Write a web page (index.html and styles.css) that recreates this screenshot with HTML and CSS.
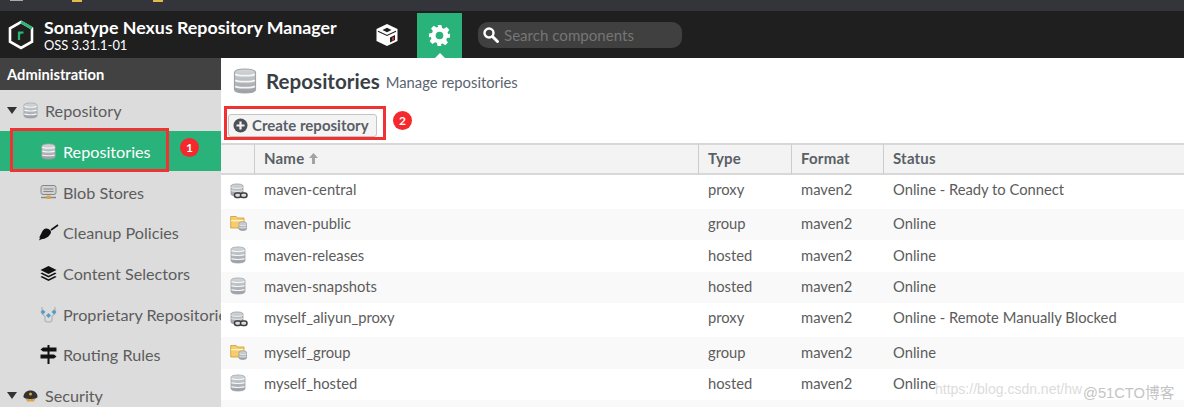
FILE: index.html
```html
<!DOCTYPE html>
<html lang="en">

<head>
    <meta charset="UTF-8">
    <meta name="viewport" content="width=device-width, initial-scale=1.0">
    <title>Repositories - Nexus Repository Manager</title>
    <link rel="stylesheet" href="styles.css">
</head>

<body>
    <!-- shared icons -->
    <svg class="defs" width="0" height="0">
        <defs>
            <linearGradient id="dbfill" x1="0" y1="0" x2="0" y2="1">
                <stop offset="0" stop-color="#d4d7da" />
                <stop offset="1" stop-color="#9a9ea3" />
            </linearGradient>
            <symbol id="db" viewBox="0 0 16 18">
                <path d="M1 3.500C1 1.800 4.200 1 8 1s7 .8 7 2.500v11c0 1.700-3.200 2.500-7 2.500s-7-.8-7-2.500z" fill="url(#dbfill)" stroke="#a0a4a8" stroke-width=".8" />
                <path d="M1.500 4.500c1.500 1.300 11.500 1.300 13 0M1.500 8.500c1.500 1.300 11.500 1.300 13 0M1.500 12.500c1.500 1.300 11.500 1.300 13 0" fill="none" stroke="#f4f5f6" stroke-width="1.200" />
            </symbol>
            <symbol id="proxy" viewBox="0 0 18 16">
                <path d="M1 3c0-1.400 2.700-2 6-2s6 .6 6 2v8c0 1.400-2.700 2-6 2s-6-.6-6-2z" fill="url(#dbfill)" stroke="#8d9196" stroke-width=".7" />
                <path d="M1.400 4.500c1.200 1 10 1 11.200 0M1.400 7.500c1.200 1 10 1 11.200 0" fill="none" stroke="#f4f5f6" />
                <rect x="4.500" y="10" width="6.500" height="4.500" rx="2.200" fill="#ddd" stroke="#3a3d40" stroke-width="1.500" />
                <rect x="10.500" y="10" width="6.500" height="4.500" rx="2.200" fill="#ddd" stroke="#3a3d40" stroke-width="1.500" />
            </symbol>
            <symbol id="group" viewBox="0 0 18 16">
                <path d="M.7 1.500h5.500l1.500 1.500H14V13H.7z" fill="#f5cd6c" stroke="#cf9a33" stroke-width=".8" />
                <path d="M1.200 5h12.300v1.300H1.200z" fill="#fff2c8" />
                <path d="M9 8.300c0-.9 1.700-1.400 3.700-1.400s3.800.5 3.800 1.400V14c0 .9-1.800 1.400-3.800 1.400S9 14.900 9 14z" fill="url(#dbfill)" stroke="#8d9196" stroke-width=".7" />
                <path d="M9.300 10c1 .7 6 .7 7 0M9.300 12.400c1 .7 6 .7 7 0" fill="none" stroke="#f4f5f6" stroke-width=".8" />
            </symbol>
        </defs>
    </svg>

    <div class="strip">
        <span class="strip-dots"></span>
        <span class="strip-tab"></span>
        <span class="strip-tab"></span>
    </div>

    <header class="topbar">
        <svg class="logo" viewBox="0 0 26 30">
            <path d="M13 2 24 8.300V21.700L13 28 2 21.700V8.300z" fill="none" stroke="#fff" stroke-width="2.600" />
            <path d="M13 2 24 8.300" fill="none" stroke="#2bb673" stroke-width="2.800" />
            <path d="M11 20v-7.500h4.500M11 15c0-1.500 1.500-2.500 4.500-2.500" fill="none" stroke="#2bb673" stroke-width="2.200" />
        </svg>
        <div class="brand">
            <div class="brand-name">Sonatype Nexus Repository Manager</div>
            <div class="brand-ver">OSS 3.31.1-01</div>
        </div>
        <div class="nav-cube">
            <svg width="24" height="24" viewBox="0 0 24 24">
                <path d="M12 1 22.500 6V18L12 23 1.500 18V6z" fill="#fff" />
                <path d="M7.500 7 12 4.800 16.500 7 12 9.200z" fill="#1f1f1f" />
                <path d="M3 8.200 12 12.500 21 8.200" fill="none" stroke="#1f1f1f" stroke-width="1.100" />
                <path d="M15 14.500l5-2.400v5L15 19.500z" fill="#1f1f1f" />
                <path d="M17 14.700l2-1v3l-2 1z" fill="#c0392b" />
            </svg>
        </div>
        <div class="nav-gear">
            <svg width="23" height="23" viewBox="0 0 24 24">
                <path fill="#fff" fill-rule="evenodd" d="M10 1h4l.7 3.200 1.900.8 2.800-1.800 2.800 2.800-1.800 2.800.8 1.900L23 10v4l-3.200.7-.8 1.900 1.800 2.800-2.800 2.800-2.800-1.800-1.900.8L14 23h-4l-.7-3.200-1.900-.8-2.800 1.800-2.800-2.800 1.800-2.800-.8-1.900L1 14v-4l3.200-.7.8-1.900-1.800-2.800 2.800-2.800 2.800 1.800 1.900-.8zM12 8a4 4 0 1 0 0 8 4 4 0 0 0 0-8z" />
            </svg>
        </div>
        <div class="search">
            <svg width="18" height="18" viewBox="0 0 18 18">
                <circle cx="7" cy="7" r="4.500" fill="none" stroke="#fff" stroke-width="2.400" />
                <path d="M10.500 10.500 15.500 15.500" stroke="#fff" stroke-width="3" stroke-linecap="round" />
            </svg>
            <input type="text" placeholder="Search components">
        </div>
    </header>

    <div class="layout">
        <aside class="side">
            <div class="side-head">Administration</div>
            <div class="item group-item">
                <span class="caret"></span>
                <svg class="ic" width="15" height="17"><use href="#db" /></svg>
                <span>Repository</span>
            </div>
            <div class="item sub active">
                <svg class="ic" width="15" height="17"><use href="#db" /></svg>
                <span>Repositories</span>
            </div>
            <div class="item sub">
                <svg class="ic" width="17" height="17" viewBox="0 0 17 17">
                    <rect x="1" y="1.500" width="15" height="9" rx="2" fill="#cfd1d3" stroke="#85888b" />
                    <path d="M3.500 5h10M3.500 7.500h10" stroke="#85888b" />
                    <path d="M1 13.500h15" stroke="#85888b" stroke-width="1.500" />
                    <rect x="6.500" y="11.500" width="4" height="3.500" fill="#d9a441" />
                </svg>
                <span>Blob Stores</span>
            </div>
            <div class="item sub">
                <svg class="ic" width="21" height="17" viewBox="0 0 21 17">
                    <path d="M13 6 20 1" stroke="#111" stroke-width="1.600" />
                    <path d="M8 4.500c2 0 5 1.500 5 3.500 0 3-5 7-8 7-1 0-2.500.5-4 1.500.5-1.500 1-3 1.500-3.500L1 14c1-2 2-4 3-6 1-2 2.500-3.500 4-3.500z" fill="#111" />
                </svg>
                <span>Cleanup Policies</span>
            </div>
            <div class="item sub">
                <svg class="ic" width="17" height="17" viewBox="0 0 17 17">
                    <path d="M8.500 1 16.500 5 8.500 9 .5 5z" fill="#111" />
                    <path d="M2 7.500 .5 8.500l8 4 8-4-1.500-1-6.500 3.200z" fill="#111" />
                    <path d="M2 11 .5 12l8 4 8-4-1.500-1-6.500 3.200z" fill="#111" />
                </svg>
                <span>Content Selectors</span>
            </div>
            <div class="item sub">
                <svg class="ic" width="17" height="17" viewBox="0 0 17 17">
                    <path d="M2 1v6c0 2 3 2 3 4v3c0 1 1 2 3.500 2s3.500-1 3.500-2v-3c0-2 3-2 3-4V1" fill="none" stroke="#b5b8bb" stroke-width="1.400" />
                    <path d="M.5 6 3 3.500 5.500 6 3 8.500zM11.500 6 14 3.500 16.500 6 14 8.500zM6 9.500l2.500-2.500 2.500 2.500L8.500 12z" fill="#5a9bc4" />
                </svg>
                <span>Proprietary Repositories</span>
            </div>
            <div class="item sub">
                <svg class="ic" width="17" height="19" viewBox="0 0 17 19">
                    <path d="M7.500 0h2v19h-2z" fill="#111" />
                    <path d="M3 2.500h13.500v4H3L.5 4.500zM14 9.500H.5v4H14l2.500-2z" fill="#111" />
                </svg>
                <span>Routing Rules</span>
            </div>
            <div class="item group-item">
                <span class="caret"></span>
                <svg class="ic" width="15" height="15" viewBox="0 0 15 15">
                    <path d="M.5 9C.5 5 3.500 2.500 7.500 2.500S14.500 5 14.500 9c0 1-3 2-7 2S.5 10 .5 9z" fill="#333" />
                    <circle cx="7.500" cy="6" r="1.500" fill="#d9a441" />
                    <path d="M3 11h9l-1 2.500H4z" fill="#d9a441" />
                </svg>
                <span>Security</span>
            </div>
        </aside>

        <main class="main">
            <div class="title-row">
                <svg width="24" height="28"><use href="#db" /></svg>
                <h1>Repositories</h1>
                <span class="title-sub">Manage repositories</span>
            </div>
            <div class="toolbar">
                <button class="create">
                    <svg width="15" height="15" viewBox="0 0 15 15">
                        <circle cx="7.500" cy="7.500" r="7" fill="#4c5157" />
                        <path d="M7.500 3.500v8M3.500 7.500h8" stroke="#f4f4f4" stroke-width="2.200" />
                    </svg>
                    Create repository
                </button>
            </div>
            <table class="grid">
                <colgroup>
                    <col class="c-icon">
                    <col class="c-name">
                    <col class="c-type">
                    <col class="c-format">
                    <col>
                </colgroup>
                <thead>
                    <tr>
                        <th></th>
                        <th>
                            Name
                            <svg class="sort" width="9" height="11" viewBox="0 0 9 11">
                                <path d="M4.500 0 9 5H6v6H3V5H0z" fill="#a3a3a3" />
                            </svg>
                        </th>
                        <th>Type</th>
                        <th>Format</th>
                        <th>Status</th>
                    </tr>
                </thead>
                <tbody>
                    <tr class="h34">
                        <td class="icon"><svg width="18" height="16"><use href="#proxy" /></svg></td>
                        <td>maven-central</td><td>proxy</td><td>maven2</td><td>Online - Ready to Connect</td>
                    </tr>
                    <tr class="h31">
                        <td class="icon"><svg width="18" height="16"><use href="#group" /></svg></td>
                        <td>maven-public</td><td>group</td><td>maven2</td><td>Online</td>
                    </tr>
                    <tr class="h32">
                        <td class="icon"><svg width="16" height="18"><use href="#db" /></svg></td>
                        <td>maven-releases</td><td>hosted</td><td>maven2</td><td>Online</td>
                    </tr>
                    <tr class="h31">
                        <td class="icon"><svg width="16" height="18"><use href="#db" /></svg></td>
                        <td>maven-snapshots</td><td>hosted</td><td>maven2</td><td>Online</td>
                    </tr>
                    <tr class="h34">
                        <td class="icon"><svg width="18" height="16"><use href="#proxy" /></svg></td>
                        <td>myself_aliyun_proxy</td><td>proxy</td><td>maven2</td><td>Online - Remote Manually Blocked</td>
                    </tr>
                    <tr class="h32">
                        <td class="icon"><svg width="18" height="16"><use href="#group" /></svg></td>
                        <td>myself_group</td><td>group</td><td>maven2</td><td>Online</td>
                    </tr>
                    <tr class="h31">
                        <td class="icon"><svg width="16" height="18"><use href="#db" /></svg></td>
                        <td>myself_hosted</td><td>hosted</td><td>maven2</td><td>Online</td>
                    </tr>
                    <tr class="h31">
                        <td></td><td></td><td></td><td></td><td></td>
                    </tr>
                </tbody>
            </table>
        </main>
    </div>

    <!-- screenshot annotations -->
    <div class="mark mark1"></div>
    <div class="badge badge1">1</div>
    <div class="mark mark2"></div>
    <div class="badge badge2">2</div>
    <div class="wm wm1">https://blog.csdn.net/hw</div>
    <div class="wm wm2">@51CTO博客</div>
</body>

</html>
```

FILE: styles.css
```css
* {
    box-sizing: border-box;
}

html,
body {
    margin: 0;
    height: 407px;
    overflow: hidden;
}

body {
    font-family: "Lato", "Noto Sans CJK SC", sans-serif;
    font-size: 15px;
    color: #555;
    background-color: #fff;
    position: relative;
}

.defs {
    display: block;
    height: 0;
}

/* top strip */
.strip {
    height: 11px;
    background-color: #33353a;
    display: flex;
    padding-left: 10px;
}

.strip-dots {
    width: 13px;
    height: 1px;
    background-color: #aaa;
    margin-right: 49px;
}

.strip-tab {
    width: 10px;
    height: 2px;
    background-color: #e4b84a;
    margin-right: 71px;
}

/* header */
.topbar {
    height: 47px;
    background-color: #1f1f1f;
    display: flex;
    align-items: center;
    padding-left: 8px;
}

.logo {
    width: 26px;
    height: 30px;
    margin-right: 10px;
}

.brand {
    color: #fff;
    width: 331px;
}

.brand-name {
    font-size: 17.800px;
    font-weight: 700;
    line-height: 21px;
}

.brand-ver {
    font-size: 12.900px;
    line-height: 14px;
}

.nav-cube {
    width: 25px;
    display: flex;
    margin-right: 17px;
}

.nav-gear {
    width: 45px;
    height: 45px;
    margin-top: 2px;
    background-color: #2ab27b;
    display: flex;
    align-items: center;
    justify-content: center;
    position: relative;
}

.nav-gear::after {
    content: "";
    position: absolute;
    bottom: 0;
    left: 18px;
    border: 5px solid transparent;
    border-top: 0;
    border-bottom-color: #fff;
}

.search {
    margin-left: 16px;
    width: 204px;
    height: 26px;
    border-radius: 10px;
    background-color: #404040;
    display: flex;
    align-items: center;
    padding-left: 4px;
    gap: 4px;
}

.search input {
    border: none;
    background: none;
    outline: none;
    padding: 0;
    width: 170px;
    font-family: inherit;
    font-size: 15.100px;
}

.search input::placeholder {
    color: #757575;
}

/* body */
.layout {
    display: flex;
    height: 349px;
    overflow: hidden;
}

.side {
    width: 221px;
    height: 349px;
    background-color: #dcdcdc;
    overflow: hidden;
    flex-shrink: 0;
}

.side-head {
    height: 32px;
    background-color: #424242;
    color: #fff;
    font-weight: 700;
    font-size: 14.700px;
    line-height: 33px;
    padding-left: 7px;
}

.item {
    height: 40.700px;
    padding-top: 1px;
    display: flex;
    align-items: center;
    white-space: nowrap;
    font-size: 16.200px;
    color: #5c5c5c;
}

.ic {
    flex-shrink: 0;
}

.group-item {
    padding-left: 7px;
}

.caret {
    flex-shrink: 0;
    border: 5px solid transparent;
    border-bottom: 0;
    border-top: 7px solid #333;
    margin-right: 6px;
}

.group-item .ic {
    margin-right: 7px;
}

.sub {
    padding-left: 38px;
}

.sub .ic {
    margin-right: 4px;
    width: 21px;
}

.active {
    background-color: #2ab27b;
    color: #fff;
}

.main {
    flex: 1;
    min-width: 0;
    height: 349px;
    overflow: hidden;
}

.title-row {
    display: flex;
    align-items: center;
    height: 46px;
    padding-left: 12px;
}

.title-row svg {
    margin-right: 9px;
}

h1 {
    margin: 0;
    font-size: 20.600px;
    font-weight: 700;
    color: #3a3f45;
}

.title-sub {
    margin-left: 6px;
    margin-top: 2px;
    font-size: 14.800px;
    color: #5a6470;
}

.toolbar {
    height: 39px;
    padding: 10px 0 0 7px;
}

.create {
    width: 149px;
    height: 23px;
    padding: 0 0 2px 4px;
    border: 1px solid #c4c4c4;
    border-radius: 3px;
    background-color: #f4f4f4;
    display: flex;
    align-items: center;
    gap: 4px;
    font-family: inherit;
    font-size: 15px;
    font-weight: 700;
    color: #5a5f66;
}

.create svg {
    margin-top: 2px;
}

.grid {
    width: 963px;
    border-collapse: separate;
    border-spacing: 0;
    table-layout: fixed;
    font-size: 14.750px;
}

.c-icon {
    width: 33px;
}

.c-name {
    width: 444px;
}

.c-type {
    width: 93px;
}

.c-format {
    width: 92px;
}

.grid th {
    height: 32px;
    background-color: #f3f3f3;
    border-top: 2px solid #d8d8d8;
    border-bottom: 2px solid #d8d8d8;
    border-left: 1px solid #ccc;
    text-align: left;
    padding: 0 0 2px 9px;
    font-size: 15px;
    letter-spacing: .2px;
    font-weight: 700;
    color: #5a5f66;
}

.grid th:first-child {
    border-left: none;
}

.sort {
    margin-left: 1px;
}

.grid td {
    padding: 0 0 3px 10px;
    color: #5c5c5c;
}

.grid .h34 td {
    padding-bottom: 7px;
}

.grid td.icon {
    padding-left: 9px;
    padding-bottom: 3px;
}

.grid tbody tr:nth-child(even) {
    background-color: #f9f9f9;
}

.grid td svg {
    display: block;
}

.h34 {
    height: 34px;
}

.h32 {
    height: 32px;
}

.h31 {
    height: 31px;
}

/* annotations over the shot */
.mark {
    position: absolute;
    border: 3px solid #f03232;
}

.mark1 {
    left: 10px;
    top: 128px;
    width: 159px;
    height: 44px;
}

.mark2 {
    left: 224px;
    top: 106px;
    width: 162px;
    height: 34px;
}

.badge {
    position: absolute;
    width: 19px;
    height: 19px;
    border-radius: 50%;
    background-color: #f5282d;
    color: #fff;
    font-size: 12px;
    font-weight: 700;
    line-height: 19px;
    text-align: center;
}

.badge1 {
    left: 180px;
    top: 138px;
}

.badge2 {
    left: 393px;
    top: 111px;
}

.wm {
    position: absolute;
    top: 381px;
    white-space: nowrap;
    color: #dcdcdc;
    font-family: "Liberation Sans", "Noto Sans CJK SC", sans-serif;
    font-size: 14px;
}

.wm1 {
    left: 935px;
}

.wm2 {
    left: 1083px;
    color: #c4c4c4;
    font-size: 14.700px;
    top: 381px;
}
```
